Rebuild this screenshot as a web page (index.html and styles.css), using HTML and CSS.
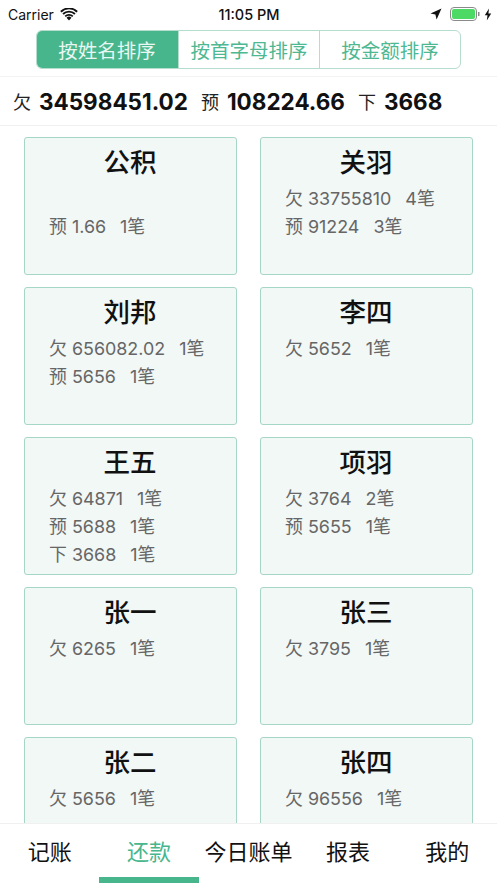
FILE: index.html
```html
<!DOCTYPE html>
<html lang="zh">
<head>
<meta charset="utf-8">
<title>还款</title>
<link rel="stylesheet" href="styles.css">
</head>
<body>
<div class="app">
  <header class="status">
    <div class="status-left">
      <span>Carrier</span>
      <svg class="wifi" viewBox="0 0 18 13" width="18" height="13"><path d="M9 12.6 6.5 9.8a3.6 3.6 0 0 1 5 0Z" fill="#111"/><path d="M4.6 7.7a6.3 6.3 0 0 1 8.8 0l-1.2 1.4a4.5 4.5 0 0 0-6.4 0Z" fill="#111"/><path d="M2.4 5.3a9.5 9.5 0 0 1 13.2 0l-1.3 1.4a7.6 7.6 0 0 0-10.6 0Z" fill="#111"/><path d="M.2 3a12.7 12.7 0 0 1 17.6 0l-1.3 1.4a10.8 10.8 0 0 0-15 0Z" fill="#111"/></svg>
    </div>
    <div class="status-time">11:05 PM</div>
    <div class="status-right">
      <svg class="arrow" viewBox="0 0 12 12" width="12" height="12"><path d="M11.5.5 6.6 11.5 5.4 6.6.5 5.4Z" fill="#111"/></svg>
      <svg viewBox="0 0 30 14" width="30" height="14"><rect x=".5" y=".5" width="26" height="13" rx="3.5" fill="none" stroke="#8a8a8a"/><rect x="2" y="2" width="23" height="10" rx="2" fill="#4cd964"/><rect x="28" y="5" width="1.5" height="4" fill="#8a8a8a"/></svg>
      <svg viewBox="0 0 8 13" width="8" height="13"><path d="M5 .5.8 7.2h2.7L2.8 12.5 7.2 5.6H4.4Z" fill="#111"/></svg>
    </div>
  </header>

  <nav class="segment">
    <div class="seg seg-on">按姓名排序</div>
    <div class="seg">按首字母排序</div>
    <div class="seg">按金额排序</div>
  </nav>

  <section class="summary">
    <span>欠</span><b>34598451.02</b>
    <span class="gap">预</span><b>108224.66</b>
    <span class="gap">下</span><b>3668</b>
  </section>

  <main class="list">
    <div class="grid">
      <article class="card"><h2>公积</h2><p class="blank">&nbsp;</p><p>预 1.66<i>1笔</i></p></article>
      <article class="card"><h2>关羽</h2><p>欠 33755810<i>4笔</i></p><p>预 91224<i>3笔</i></p></article>
      <article class="card"><h2>刘邦</h2><p>欠 656082.02<i>1笔</i></p><p>预 5656<i>1笔</i></p></article>
      <article class="card"><h2>李四</h2><p>欠 5652<i>1笔</i></p></article>
      <article class="card"><h2>王五</h2><p>欠 64871<i>1笔</i></p><p>预 5688<i>1笔</i></p><p>下 3668<i>1笔</i></p></article>
      <article class="card"><h2>项羽</h2><p>欠 3764<i>2笔</i></p><p>预 5655<i>1笔</i></p></article>
      <article class="card"><h2>张一</h2><p>欠 6265<i>1笔</i></p></article>
      <article class="card"><h2>张三</h2><p>欠 3795<i>1笔</i></p></article>
      <article class="card"><h2>张二</h2><p>欠 5656<i>1笔</i></p></article>
      <article class="card"><h2>张四</h2><p>欠 96556<i>1笔</i></p></article>
    </div>
  </main>

  <footer class="tabs">
    <div class="tab">记账</div>
    <div class="tab tab-on">还款</div>
    <div class="tab">今日账单</div>
    <div class="tab">报表</div>
    <div class="tab">我的</div>
  </footer>
</div>
</body>
</html>
```
FILE: styles.css
```css
* { box-sizing: border-box; margin: 0; padding: 0; }
html, body { width: 497px; height: 883px; overflow: hidden; background: #fff; }
body { font-family: Inter, "Noto Sans CJK SC", sans-serif; color: #111; }
.app { height: 883px; display: flex; flex-direction: column; }

.status { height: 28px; flex: none; display: grid; grid-template-columns: 1fr auto 1fr; align-items: center; padding: 0 5px 0 8px; font-size: 14px; }
.status-left { display: flex; align-items: center; gap: 6px; }
.status-time { font-weight: 500; font-size: 14.5px; margin-left: 1px; margin-right: 3px; }
.status-right { display: flex; align-items: center; justify-content: flex-end; gap: 4px; }
.arrow { margin-right: 4px; }

.segment { height: 39px; flex: none; margin: 2px 36px 0; display: grid; grid-template-columns: 141px 141px 1fr; border: 1px solid #b5dccd; border-radius: 6px; overflow: hidden; }
.seg { display: flex; align-items: center; justify-content: center; font-size: 19.5px; color: #4eb892; border-left: 1px solid #b5dccd; }
.seg:first-child { border-left: 0; }
.seg-on { background: #47b68d; color: #e9f6f1; margin: -1px 0 -1px -1px; }

.summary { height: 50px; margin-top: 7px; flex: none; display: flex; align-items: center; padding: 0 13px; border-top: 1px solid #f3f3f3; border-bottom: 1px solid #f0f0f0; font-size: 18px; color: #222; }
.summary b { font-size: 22.5px; font-weight: 700; color: #111; margin-left: 8px; }
.summary .gap { margin-left: 13px; }

.list { flex: 1; min-height: 0; overflow: hidden; padding: 11px 24px 0; }
.grid { display: grid; grid-template-columns: 213px 213px; column-gap: 23px; row-gap: 12px; }
.card { height: 138px; padding: 6px 24px 0; background: #f2f8f6; border: 1px solid #a6d6c5; border-radius: 3px; }
.card h2 { font-size: 26.5px; line-height: 36px; font-weight: 500; color: #111; text-align: center; margin-bottom: 5px; margin-left: -1px; margin-right: 0; }
.card p { font-size: 17.9px; line-height: 28px; color: #666; white-space: nowrap; }
.card i { font-style: normal; margin-left: 14px; }

.tabs { height: 60px; flex: none; display: grid; grid-template-columns: repeat(5, 1fr); background: #fff; border-top: 1px solid #f0f0f0; }
.tab { display: flex; justify-content: center; padding-top: 13px; font-size: 22px; line-height: 30px; color: #111; }
.tab-on { color: #47b68d; border-bottom: 6px solid #47b68d; }
```
